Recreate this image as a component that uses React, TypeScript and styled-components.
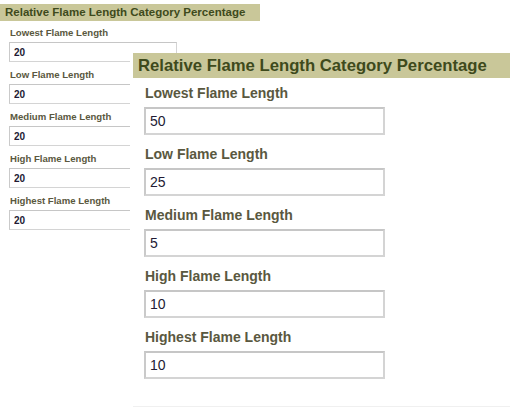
import React from "react";
import styled, { createGlobalStyle } from "styled-components";

const GlobalStyle = createGlobalStyle`
  html, body { margin: 0; padding: 0; background: #ffffff; }
  body { font-family: "Liberation Sans", Arial, sans-serif; }
  * { box-sizing: border-box; }
`;

type Size = "sm" | "lg";

const M = {
  sm: {
    bandH: 17, bandFont: 11.5, bandPad: 5, bandMarginLeft: 0,
    padLeft: 9, labelFont: 9.6, labelLine: 12, labelGap: 6,
    labelToInput: 3, inputH: 20, inputW: 168, inputFont: 10, inputPad: 4, rowGap: 7,
    border: 1,
  },
  lg: {
    bandH: 25, bandFont: 16.7, bandPad: 5, bandMarginLeft: 3,
    padLeft: 14, labelFont: 14, labelLine: 17, labelGap: 7,
    labelToInput: 5, inputH: 28, inputW: 241, inputFont: 14, inputPad: 4, rowGap: 11,
    border: 2,
  },
};

const Page = styled.div`
  position: relative;
  width: 510px;
  height: 407px;
  overflow: hidden;
  background: #fff;
`;

const Panel = styled.section<{ $size: Size }>`
  display: flex;
  flex-direction: column;
  background: #fff;
  ${({ $size }) =>
    $size === "sm"
      ? `padding-top: 4px; width: 260px;`
      : `position: absolute; left: 130px; top: 53px; width: 380px; height: 354px;`}
`;

const Band = styled.h2<{ $size: Size }>`
  margin: 0 0 0 ${({ $size }) => M[$size].bandMarginLeft}px;
  height: ${({ $size }) => M[$size].bandH}px;
  line-height: ${({ $size }) => M[$size].bandH}px;
  padding-left: ${({ $size }) => M[$size].bandPad}px;
  background: #c9c799;
  color: #3e4a1c;
  font-size: ${({ $size }) => M[$size].bandFont}px;
  font-weight: bold;
  white-space: nowrap;
`;

const Fields = styled.div<{ $size: Size }>`
  display: flex;
  flex-direction: column;
  gap: ${({ $size }) => M[$size].rowGap}px;
  padding-left: ${({ $size }) => M[$size].padLeft}px;
  padding-top: ${({ $size }) => M[$size].labelGap}px;
`;

const Field = styled.div<{ $size: Size }>`
  display: flex;
  flex-direction: column;
  gap: ${({ $size }) => M[$size].labelToInput}px;
`;

const Label = styled.label<{ $size: Size }>`
  display: block;
  padding-left: 1px;
  font-size: ${({ $size }) => M[$size].labelFont}px;
  line-height: ${({ $size }) => M[$size].labelLine}px;
  font-weight: bold;
  color: #5a5840;
  white-space: nowrap;
`;

const Input = styled.input<{ $size: Size }>`
  display: block;
  width: ${({ $size }) => M[$size].inputW}px;
  height: ${({ $size }) => M[$size].inputH}px;
  margin: 0;
  padding: 0 0 0 ${({ $size }) => M[$size].inputPad}px;
  border: ${({ $size }) => M[$size].border}px solid #d4d4d4;
  border-top-color: #c6c6c6;
  border-left-color: #cacaca;
  background: #fff;
  color: #221a33;
  font-family: "Liberation Sans", Arial, sans-serif;
  font-size: ${({ $size }) => M[$size].inputFont}px;
  font-weight: ${({ $size }) => ($size === "sm" ? "bold" : "normal")};
  outline: none;
`;

const BottomRule = styled.div`
  margin-top: auto;
  margin-left: 3px;
  height: 1px;
  background: #f0f0f0;
`;

const labels = [
  "Lowest Flame Length",
  "Low Flame Length",
  "Medium Flame Length",
  "High Flame Length",
  "Highest Flame Length",
];

function FlamePanel({ size, values }: { size: Size; values: string[] }) {
  return (
    <Panel $size={size}>
      <Band $size={size}>Relative Flame Length Category Percentage</Band>
      <Fields $size={size}>
        {labels.map((l, i) => (
          <Field $size={size} key={l}>
            <Label $size={size}>{l}</Label>
            <Input $size={size} defaultValue={values[i]} readOnly />
          </Field>
        ))}
      </Fields>
      {size === "lg" && <BottomRule />}
    </Panel>
  );
}

export default function App() {
  return (
    <Page>
      <GlobalStyle />
      <FlamePanel size="sm" values={["20", "20", "20", "20", "20"]} />
      <FlamePanel size="lg" values={["50", "25", "5", "10", "10"]} />
    </Page>
  );
}
